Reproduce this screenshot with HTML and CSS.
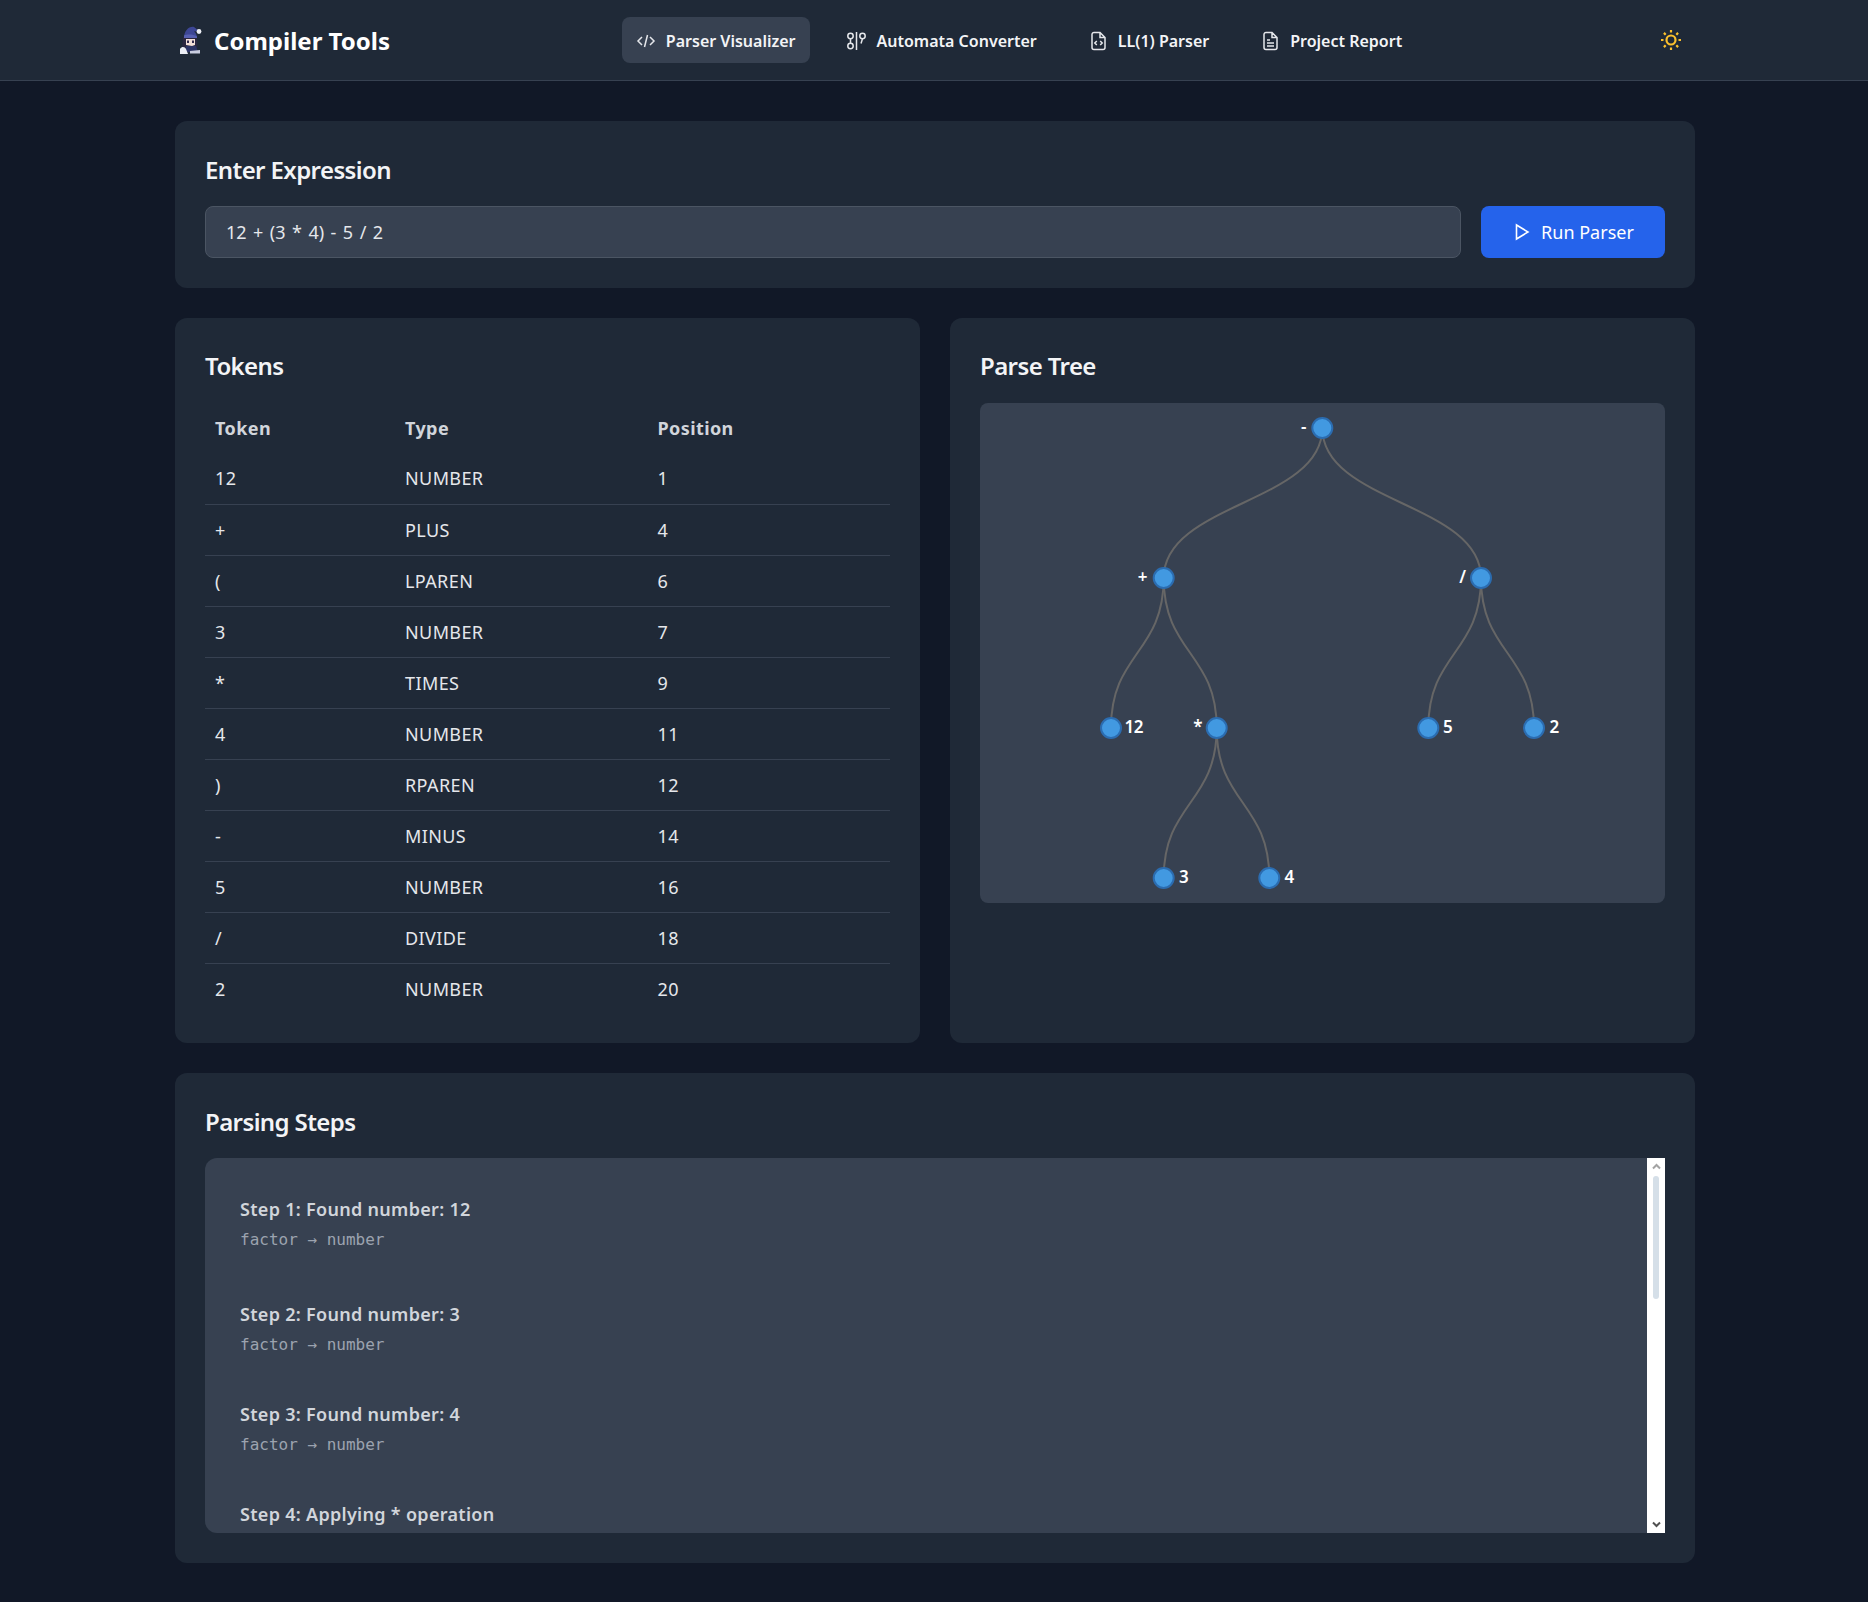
FILE: index.html
```html
<!DOCTYPE html>
<html lang="en">
  <head>
    <meta charset="UTF-8" />
    <meta name="viewport" content="width=device-width, initial-scale=1.0" />
    <title>Compiler Tools</title>
    <link rel="stylesheet" href="styles.css">
  </head>
  <body>
    <header class="topbar">
      <div class="topbar-inner">
        <a class="brand" href="#">
          <svg class="brand-pic" viewBox="0 0 23 28" width="23" height="28">
            <path d="M5 12 C5 5 10 0 15 1 L20 5 L15 5.500 C17 7 18 9 18 12 Z" fill="#3d4694" />
            <circle cx="20" cy="5.500" r="2.400" fill="#eef0f6" />
            <path d="M4 11 L18 11 L18.500 22 L15 24 L3 24 Z" fill="#2b2740" />
            <path d="M5 9.500 C8 8 14 8 18 10.500 L18 12 L5 12 Z" fill="#565fb0" />
            <path d="M7 13 L16 13 L16 19 L13 20 L7 19 Z" fill="#f4dfd8" />
            <rect x="8" y="14.500" width="2" height="2.500" fill="#332c4f" />
            <rect x="13" y="14.500" width="2" height="2.500" fill="#332c4f" />
            <path d="M7 20 L17 20 L19 26 L7 26 Z" fill="#2e3566" />
            <path d="M1 23 C3 20 6 21 7 23 L9 28 L1 28 Z" fill="#eceef5" />
            <path d="M11 25 L21 24 L21 27.500 L11 27.500 Z" fill="#c9cde0" />
          </svg>
          <span>Compiler Tools</span>
        </a>
        <nav class="nav">
          <a class="nav-item active" href="#">
            <svg class="nav-icon" viewBox="0 0 20 20"><path d="M6 6 L2 10 L6 14 M14 6 L18 10 L14 14 M11.500 4 L8.500 16" /></svg>
            Parser Visualizer
          </a>
          <a class="nav-item" href="#">
            <svg class="nav-icon" viewBox="0 0 20 20"><circle cx="3.500" cy="5" r="2.700" /><circle cx="3.500" cy="15" r="2.700" /><path d="M3.500 7.700 V12.300 M9.500 1 V19" /><circle cx="15.500" cy="5" r="2.700" /><path d="M15.500 7.700 L14 12.500" /></svg>
            Automata Converter
          </a>
          <a class="nav-item" href="#">
            <svg class="nav-icon" viewBox="0 0 20 20"><path d="M12 1.500 H6 A2 2 0 0 0 4 3.500 V16.500 A2 2 0 0 0 6 18.500 H15 A2 2 0 0 0 17 16.500 V6.500 Z M12 1.500 V6.500 H17" /><path d="M8.800 10 L6.800 12 L8.800 14 M12.200 10 L14.200 12 L12.200 14" /></svg>
            LL(1) Parser
          </a>
          <a class="nav-item" href="#">
            <svg class="nav-icon" viewBox="0 0 20 20"><path d="M12 1.500 H6 A2 2 0 0 0 4 3.500 V16.500 A2 2 0 0 0 6 18.500 H15 A2 2 0 0 0 17 16.500 V6.500 Z M12 1.500 V6.500 H17" /><path d="M7 9 H10 M7 12 H14 M7 15 H14" /></svg>
            Project Report
          </a>
        </nav>
        <button class="theme-btn" type="button" aria-label="Toggle theme">
          <svg viewBox="0 0 24 24" width="24" height="24"><circle cx="12" cy="12" r="4.500" /><path d="M12 2 V4.500 M12 19.500 V22 M2 12 H4.500 M19.500 12 H22 M4.900 4.900 L6.700 6.700 M17.300 17.300 L19.100 19.100 M4.900 19.100 L6.700 17.300 M17.300 6.700 L19.100 4.900" /></svg>
        </button>
      </div>
    </header>

    <main class="page">
      <section class="card">
        <h2 class="card-title">Enter Expression</h2>
        <form class="expr-form">
          <input class="expr-input" type="text" value="12 + (3 * 4) - 5 / 2" />
          <button class="run-btn" type="button">
            <svg viewBox="0 0 20 20" width="20" height="20"><path d="M4.500 3 L16 10 L4.500 17 Z" /></svg>
            Run Parser
          </button>
        </form>
      </section>

      <div class="columns">
        <section class="card">
          <h2 class="card-title">Tokens</h2>
          <table class="tokens">
            <colgroup>
              <col class="col-token" />
              <col class="col-type" />
              <col class="col-pos" />
            </colgroup>
            <thead>
              <tr><th>Token</th><th>Type</th><th>Position</th></tr>
            </thead>
            <tbody>
              <tr><td>12</td><td>NUMBER</td><td>1</td></tr>
              <tr><td>+</td><td>PLUS</td><td>4</td></tr>
              <tr><td>(</td><td>LPAREN</td><td>6</td></tr>
              <tr><td>3</td><td>NUMBER</td><td>7</td></tr>
              <tr><td>*</td><td>TIMES</td><td>9</td></tr>
              <tr><td>4</td><td>NUMBER</td><td>11</td></tr>
              <tr><td>)</td><td>RPAREN</td><td>12</td></tr>
              <tr><td>-</td><td>MINUS</td><td>14</td></tr>
              <tr><td>5</td><td>NUMBER</td><td>16</td></tr>
              <tr><td>/</td><td>DIVIDE</td><td>18</td></tr>
              <tr><td>2</td><td>NUMBER</td><td>20</td></tr>
            </tbody>
          </table>
        </section>

        <section class="card">
          <h2 class="card-title">Parse Tree</h2>
          <div class="tree-box">
            <svg class="tree" viewBox="0 0 685 500" width="685" height="500">
              <g class="links">
                <path d="M342.300 25 C342.300 100 183.700 100 183.700 175" />
                <path d="M342.300 25 C342.300 100 501 100 501 175" />
                <path d="M183.700 175 C183.700 250 131 250 131 325" />
                <path d="M183.700 175 C183.700 250 236.700 250 236.700 325" />
                <path d="M236.700 325 C236.700 400 183.700 400 183.700 475" />
                <path d="M236.700 325 C236.700 400 289.300 400 289.300 475" />
                <path d="M501 175 C501 250 448.300 250 448.300 325" />
                <path d="M501 175 C501 250 554 250 554 325" />
              </g>
              <g class="nodes">
                <circle cx="342.300" cy="25" r="10" />
                <circle cx="183.700" cy="175" r="10" />
                <circle cx="501" cy="175" r="10" />
                <circle cx="131" cy="325" r="10" />
                <circle cx="236.700" cy="325" r="10" />
                <circle cx="448.300" cy="325" r="10" />
                <circle cx="554" cy="325" r="10" />
                <circle cx="183.700" cy="475" r="10" />
                <circle cx="289.300" cy="475" r="10" />
              </g>
              <g class="labels">
                <text x="326" y="30" text-anchor="end">-</text>
                <text x="167" y="180" text-anchor="end">+</text>
                <text x="485.500" y="180" text-anchor="end">/</text>
                <text x="144.500" y="330">12</text>
                <text x="222" y="330" text-anchor="end">*</text>
                <text x="463" y="330">5</text>
                <text x="569.500" y="330">2</text>
                <text x="199" y="480">3</text>
                <text x="304.500" y="480">4</text>
              </g>
            </svg>
          </div>
        </section>
      </div>

      <section class="card">
        <h2 class="card-title">Parsing Steps</h2>
        <div class="steps-box">
          <div class="steps">
            <div class="step step-first"><p class="step-title">Step 1: Found number: 12</p><code class="step-rule">factor → number</code></div>
            <div class="step"><p class="step-title">Step 2: Found number: 3</p><code class="step-rule">factor → number</code></div>
            <div class="step"><p class="step-title">Step 3: Found number: 4</p><code class="step-rule">factor → number</code></div>
            <div class="step"><p class="step-title">Step 4: Applying * operation</p></div>
          </div>
          <div class="scrollbar">
            <svg class="scroll-arrow up" viewBox="0 0 18 18" width="18" height="18"><path d="M6 10.500 L9.500 7 L13 10.500" /></svg>
            <div class="scroll-thumb"></div>
            <svg class="scroll-arrow down" viewBox="0 0 18 18" width="18" height="18"><path d="M6 7.500 L9.500 11 L13 7.500" /></svg>
          </div>
        </div>
      </section>
    </main>
  </body>
</html>
```

FILE: styles.css
```css
* {
  box-sizing: border-box;
}
body {
  margin: 0;
  background-color: #111827;
  color: #e5e7eb;
  font-family: "Noto Sans", "Open Sans", sans-serif;
}

/* top bar */
.topbar {
  height: 81px;
  background-color: #1f2937;
  border-bottom: 1px solid #374151;
}
.topbar-inner {
  width: 1520px;
  height: 80px;
  margin-left: 175px;
  display: flex;
  align-items: center;
  justify-content: space-between;
}
.brand {
  display: flex;
  align-items: center;
  gap: 12px;
  width: 215px;
  margin-left: 4px;
  color: #fff;
  font-size: 24px;
  font-weight: 700;
  text-decoration: none;
  white-space: nowrap;
}
.nav {
  display: flex;
  gap: 23px;
  margin-right: 3px;
}
.nav-item {
  display: flex;
  align-items: center;
  gap: 10px;
  height: 46px;
  padding: 1px 14px 0;
  border-radius: 8px;
  color: #f3f4f6;
  font-size: 16px;
  font-weight: 600;
  text-decoration: none;
  white-space: nowrap;
}
.nav-item.active {
  background-color: #374151;
}
.nav-icon {
  width: 20px;
  height: 20px;
  fill: none;
  stroke: #e5e7eb;
  stroke-width: 1.5;
}
.theme-btn {
  width: 48px;
  height: 48px;
  padding: 0;
  display: flex;
  align-items: center;
  justify-content: center;
  background: none;
  border: 0;
}
.theme-btn svg {
  fill: none;
  stroke: #fbc02d;
  stroke-width: 2.200;
}

/* cards */
.page {
  width: 1520px;
  margin: 40px 0 39px 175px;
  display: flex;
  flex-direction: column;
  gap: 30px;
}
.columns {
  display: grid;
  grid-template-columns: 745px 745px;
  gap: 30px;
}
.card {
  padding: 29px 30px 30px;
  background-color: #1f2937;
  border-radius: 12px;
}
.columns .card {
  padding-bottom: 29px;
}
.card-title {
  margin: 0 0 18px;
  height: 38px;
  padding-top: 1px;
  color: #f3f4f6;
  font-size: 24px;
  font-weight: 600;
  line-height: 38px;
  letter-spacing: -0.6px;
}
.columns .card-title {
  padding-top: 0;
}

/* expression */
.expr-form {
  display: flex;
  gap: 20px;
}
.expr-input {
  flex: 1;
  height: 52px;
  padding: 0 20px;
  background-color: #374151;
  border: 1px solid #4b5563;
  border-radius: 8px;
  color: #e5e7eb;
  font-family: inherit;
  font-size: 18px;
  word-spacing: 1.8px;
}
.run-btn {
  width: 184px;
  height: 52px;
  display: flex;
  align-items: center;
  justify-content: center;
  gap: 9px;
  background-color: #2563eb;
  border: 0;
  border-radius: 8px;
  color: #fff;
  font-family: inherit;
  font-size: 18px;
}
.run-btn svg {
  fill: none;
  stroke: #fff;
  stroke-width: 1.6;
}

/* token table */
.tokens {
  width: 685px;
  margin-top: -1px;
  border-collapse: collapse;
  table-layout: fixed;
  font-size: 18px;
  letter-spacing: 0.4px;
}
.col-token {
  width: 190px;
}
.col-type {
  width: 252.500px;
}
.tokens th,
.tokens td {
  height: 51px;
  padding: 0 10px;
  text-align: left;
}
.tokens th {
  color: #d1d5db;
  font-weight: 700;
}
.tokens td {
  color: #e5e7eb;
  border-bottom: 1px solid #374151;
}
.tokens tbody tr:last-child td {
  border-bottom: 0;
}

/* parse tree */
.tree-box {
  height: 500px;
  background-color: #374151;
  border-radius: 8px;
  overflow: hidden;
}
.tree {
  display: block;
}
.links path {
  fill: none;
  stroke: #666;
  stroke-width: 2;
}
.nodes circle {
  fill: #4299e1;
  stroke: #2b6cb0;
  stroke-width: 2;
}
.labels text {
  fill: #fff;
  font-size: 17px;
  font-weight: 600;
  letter-spacing: -0.5px;
}

/* steps */
.steps-box {
  height: 375px;
  display: flex;
}
.steps {
  flex: 1;
  padding: 36px 0 0 35px;
  background-color: #374151;
  border-radius: 12px 0 0 12px;
  overflow: hidden;
}
.step {
  height: 100px;
}
.step-first {
  height: 105px;
}
.step-title {
  margin: 0;
  height: 30px;
  color: #d1d5db;
  font-size: 18px;
  font-weight: 600;
  line-height: 30px;
  letter-spacing: 0.3px;
}
.step-rule {
  display: block;
  margin-top: 3px;
  height: 26px;
  color: #9ca3af;
  font-family: "DejaVu Sans Mono", "Liberation Mono", monospace;
  font-size: 16px;
  line-height: 26px;
}

/* drawn scrollbar */
.scrollbar {
  width: 18px;
  display: flex;
  flex-direction: column;
  align-items: center;
  background-color: #fff;
}
.scroll-arrow {
  fill: none;
  stroke-width: 2;
}
.scroll-arrow.up {
  stroke: #a3a3a3;
}
.scroll-arrow.down {
  margin-top: auto;
  stroke: #505050;
}
.scroll-thumb {
  width: 6px;
  height: 123px;
  background-color: #d5dfe8;
  border-radius: 3px;
}
```
